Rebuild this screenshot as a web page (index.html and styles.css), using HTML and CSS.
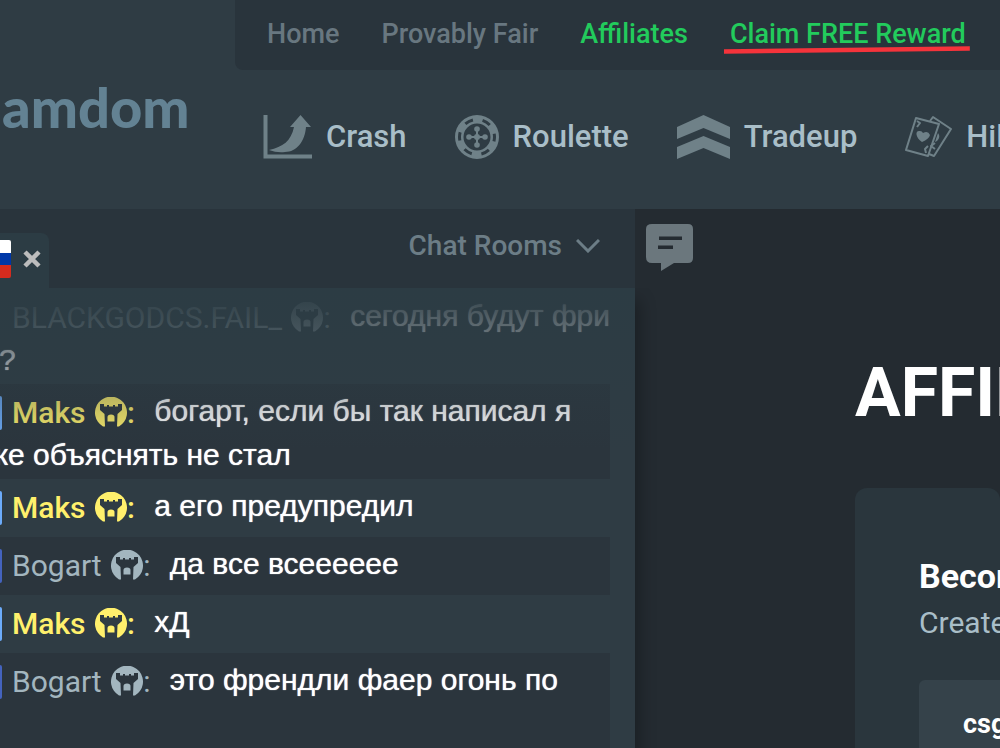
FILE: index.html
```html
<!DOCTYPE html>
<html lang="en">
<head>
    <meta charset="UTF-8">
    <meta name="viewport" content="width=device-width, initial-scale=1.0">
    <title>Gamdom - Affiliates</title>
    <link rel="stylesheet" href="styles.css">
</head>
<body>
    <svg class="sprite" aria-hidden="true">
        <symbol id="helmet" viewBox="0 0 32 30">
            <path fill-rule="evenodd" d="M8 29.5 A16 16 0 1 1 24 29.5 L22 29.5 L22.500 17 L27 13 V7 H23 V9.500 H20 V8 H18 V9.500 H14 V8 H12 V9.500 H9 V7 H5 V13 L9.500 17 L10 29.500 Z"/>
            <path d="M12.500 24.500 V20 Q12.500 17.500 16 17.500 Q19.500 17.500 19.500 20 V24.500 Z"/>
        </symbol>
    </svg>

    <header class="header">
        <a href="#" class="logo">amdom</a>
        <div class="navs">
            <nav class="top-nav">
                <a href="#">Home</a>
                <a href="#">Provably Fair</a>
                <a href="#" class="green">Affiliates</a>
                <a href="#" class="green reward">Claim FREE Reward
                    <svg class="underline" viewBox="0 0 246 8" preserveAspectRatio="none" aria-hidden="true"><path d="M0 5.500 L246 2.500" stroke="#f5333b" stroke-width="4.500"/></svg>
                </a>
            </nav>
            <nav class="game-nav">
                <a href="#">
                    <svg width="49" height="44" viewBox="0 0 49 44" aria-hidden="true">
                        <path d="M2.500 0 V41.500 H49" fill="none" stroke="currentColor" stroke-width="4"/>
                        <path d="M6 35 C20 32 28 26 31 12 H27 L37.500 0 L48 12 H43 C42 26 34 37 22 37 Q14 38 6 35 Z"/>
                    </svg>
                    Crash
                </a>
                <a href="#">
                    <svg width="44" height="44" viewBox="0 0 44 44" aria-hidden="true">
                        <path fill-rule="evenodd" d="M22 0 A22 22 0 1 1 22 44 A22 22 0 1 1 22 0 Z M22 8.500 A13.500 13.500 0 1 0 22 35.500 A13.500 13.500 0 1 0 22 8.500 Z"/>
                        <circle cx="22" cy="22" r="17.500" fill="none" stroke="#2f3c44" stroke-width="3" stroke-dasharray="8.500 9.820" stroke-dashoffset="4"/>
                        <path d="M22 13 V31 M13 22 H31" stroke="currentColor" stroke-width="2"/>
                        <circle cx="22" cy="22" r="3"/>
                        <circle cx="22" cy="14" r="2.800"/><circle cx="22" cy="30" r="2.800"/>
                        <circle cx="14" cy="22" r="2.800"/><circle cx="30" cy="22" r="2.800"/>
                    </svg>
                    Roulette
                </a>
                <a href="#">
                    <svg width="53" height="44" viewBox="0 0 54 44" preserveAspectRatio="none" aria-hidden="true">
                        <path d="M0 12 L27 0 L54 12 V24 L27 13 L0 24 Z M0 32 L27 21 L54 32 V44 L27 33 L0 44 Z"/>
                    </svg>
                    Tradeup
                </a>
                <a href="#">
                    <svg width="47" height="44" viewBox="0 0 47 44" aria-hidden="true">
                        <g fill="none" stroke="currentColor" stroke-width="2" stroke-linejoin="round">
                            <path d="M11 3 L34 9 L23 41 L1 35 Z"/>
                            <path d="M25 6 L28 2 L46 14 L29 41 L24 39"/>
                            <path d="M12 6 L15 8 L12 12 M21 38 L20 34 L23 31 M30 34 L26 31 L30 28"/>
                        </g>
                        <path d="M17 27 C10 22 10 15 15 16 Q17 16 18 18 Q23 15 25 20 Q24 24 17 27 Z"/>
                        <path d="M33 18 Q36 22 32 26 L30 27 Z"/>
                    </svg>
                    Hilo
                </a>
            </nav>
        </div>
    </header>

    <div class="page">
        <aside class="chat">
            <div class="chat-bar">
                <div class="tab">
                    <span class="flag"></span>
                    <button class="close" aria-label="Close">
                        <svg width="18" height="18" viewBox="0 0 18 18"><path d="M2 2 L16 16 M16 2 L2 16" stroke="currentColor" stroke-width="4.500"/></svg>
                    </button>
                </div>
                <button class="rooms">
                    Chat Rooms
                    <svg width="24" height="14" viewBox="0 0 24 14" aria-hidden="true"><path d="M1 1 L12 12 L23 1" fill="none" stroke="currentColor" stroke-width="3"/></svg>
                </button>
            </div>
            <div class="messages">
                <div class="message grey">
                    <span class="level"></span><span class="name">BLACKGODCS.FAIL_ <svg class="helmet"><use href="#helmet"/></svg>:</span>
                    <span class="text">сегодня будут фри г?</span>
                </div>
                <div class="message yellow">
                    <span class="level light"></span><span class="name">Maks <svg class="helmet"><use href="#helmet"/></svg>:</span>
                    <span class="text">богарт, если бы так написал я же объяснять не стал</span>
                </div>
                <div class="message yellow">
                    <span class="level light"></span><span class="name">Maks <svg class="helmet"><use href="#helmet"/></svg>:</span>
                    <span class="text">а его предупредил</span>
                </div>
                <div class="message blue">
                    <span class="level dark"></span><span class="name">Bogart <svg class="helmet"><use href="#helmet"/></svg>:</span>
                    <span class="text">да все всеееееe</span>
                </div>
                <div class="message yellow">
                    <span class="level light"></span><span class="name">Maks <svg class="helmet"><use href="#helmet"/></svg>:</span>
                    <span class="text">хД</span>
                </div>
                <div class="message blue last">
                    <span class="level dark"></span><span class="name">Bogart <svg class="helmet"><use href="#helmet"/></svg>:</span>
                    <span class="text">это френдли фаер огонь по</span>
                </div>
            </div>
        </aside>

        <main class="main">
            <button class="chat-toggle" aria-label="Toggle chat">
                <svg width="48" height="48" viewBox="0 0 48 48"><path fill-rule="evenodd" d="M6 0 H42 Q47 0 47 5 V34 Q47 39 42 39 H28 L15 47 V39 H6 Q0 39 0 33 V5 Q0 0 6 0 Z M13 12.500 V16 H36 V12.500 Z M12 21.500 V25 H27 V21.500 Z"/></svg>
            </button>
            <div class="content">
                <h1>AFFILIATES</h1>
                <section class="card">
                    <h2>Become</h2>
                    <p>Create</p>
                    <div class="code">csgo</div>
                </section>
            </div>
        </main>
    </div>
</body>
</html>
```

FILE: styles.css
```css
* {
    box-sizing: border-box;
}

body {
    margin: 0;
    height: 100vh;
    display: flex;
    flex-direction: column;
    overflow: hidden;
    background: #242b31;
    color: white;
    font-family: Roboto, "Liberation Sans", sans-serif;
}

a {
    color: inherit;
    text-decoration: none;
}

button {
    padding: 0;
    border: none;
    background: none;
    color: inherit;
    font: inherit;
    cursor: pointer;
}

svg {
    fill: currentColor;
}

.sprite {
    display: none;
}

/* Header */
.header {
    display: flex;
    background: #2f3c44;
}

.logo {
    flex: 0 0 235px;
    padding: 75px 0 0 2px;
    color: #638293;
    font-family: Lato, sans-serif;
    font-size: 56px;
    font-weight: 900;
    line-height: 64px;
}

.navs {
    flex: 1;
    min-width: 0;
}

.top-nav {
    display: flex;
    gap: 42px;
    height: 70px;
    padding: 0 32px;
    background: #29343c;
    border-bottom-left-radius: 8px;
    color: #687780;
    font-size: 27px;
    font-weight: 500;
    line-height: 68px;
    white-space: nowrap;
}

.green {
    color: #22cb5c;
}

.reward {
    position: relative;
}

.underline {
    position: absolute;
    left: -6px;
    top: 46px;
    width: calc(100% + 10px);
    height: 8px;
}

.game-nav {
    display: flex;
    gap: 48px;
    height: 139px;
    padding: 0 28px;
    color: #a9bec8;
    font-size: 31px;
    font-weight: 500;
    line-height: 134px;
    white-space: nowrap;
}

.game-nav a {
    display: flex;
    align-items: center;
    gap: 14px;
    height: 134px;
}

.game-nav svg {
    flex: none;
    color: #6f8188;
}

/* Chat */
.page {
    flex: 1;
    min-height: 0;
    display: flex;
}

.chat {
    width: 63.5%;
    display: flex;
    flex-direction: column;
    background: #2f3c44;
}

.chat-bar {
    display: flex;
    justify-content: space-between;
    align-items: flex-end;
    height: 79px;
    padding-right: 35px;
    background: #29343c;
}

.tab {
    display: flex;
    align-items: center;
    gap: 12px;
    height: 55px;
    padding: 0 8px 3px 0;
    background: #2c3c44;
    border-top-right-radius: 8px;
}

.flag {
    width: 11px;
    height: 38px;
    border-radius: 0 2px 2px 0;
    background: linear-gradient(#fff 34%, #0038a8 34% 66%, #d52b1e 66%);
}

.close {
    display: flex;
    color: #bcbcbc;
}

.rooms {
    display: flex;
    align-items: center;
    gap: 14px;
    margin-bottom: 22px;
    color: #6c7d86;
    font-size: 28px;
    font-weight: 500;
    line-height: 40px;
}

.messages {
    position: relative;
    flex: 1;
    min-height: 0;
    display: flex;
    flex-direction: column;
    padding: 1px 25px 0 0;
    box-shadow: 4px 12px 16px rgba(0, 0, 0, 0.3);
    clip-path: inset(0 -40px 0 0);
}

/* old messages fade out under the tab bar */
.messages::before {
    content: "";
    position: absolute;
    z-index: 1;
    inset: 0 0 auto 0;
    height: 162px;
    background: linear-gradient(#2c3c44, rgba(44, 60, 68, 0));
}

.message {
    flex: none;
    margin-left: -12px;
    padding: 6px 0;
    font-size: 30px;
    line-height: 37px;
}

.message:nth-child(even) {
    background: #2b353d;
}

.message:nth-child(2) {
    padding-right: 30px;
}

.last {
    flex: 1;
}

.level {
    display: inline-block;
    width: 14px;
    height: 34px;
    margin: 6px 10px 6px 0;
    border-radius: 2px;
    vertical-align: middle;
}

.light {
    background: #6cabfa;
}

.dark {
    background: #4463be;
}

.name {
    position: relative;
    top: 2px;
    margin-right: 12px;
}

.helmet {
    width: 32px;
    height: 30px;
    margin-left: 2px;
    vertical-align: -4px;
}

.text {
    color: white;
    font-family: "Liberation Sans", sans-serif;
    font-size: 30px;
    text-shadow: 0 0 1px white;
}

.grey {
    color: #8a979d;
}

.yellow {
    color: #fff06c;
}

.yellow .name {
    font-weight: 500;
}

.blue {
    color: #a3b6bf;
}

/* Main */
.main {
    flex: 1;
    min-width: 0;
    padding-top: 15px;
}

.chat-toggle {
    display: block;
    margin-left: 11px;
    color: #6b777d;
}

.chat-toggle svg {
    display: block;
}

.content {
    margin-left: 220px;
    overflow: hidden;
}

h1 {
    margin: 81px 0 55px;
    font-size: 68px;
    line-height: 80px;
}

.card {
    padding: 64px;
    background: #2a363d;
    border-radius: 12px;
}

h2 {
    margin: 0;
    font-size: 34px;
    line-height: 48px;
}

p {
    margin: 0 0 34px;
    color: #a9bec8;
    font-size: 30px;
    line-height: 46px;
}

.code {
    padding: 24px 44px;
    background: #35424a;
    border-radius: 6px;
    font-size: 27px;
    font-weight: 700;
    line-height: 40px;
}
```
